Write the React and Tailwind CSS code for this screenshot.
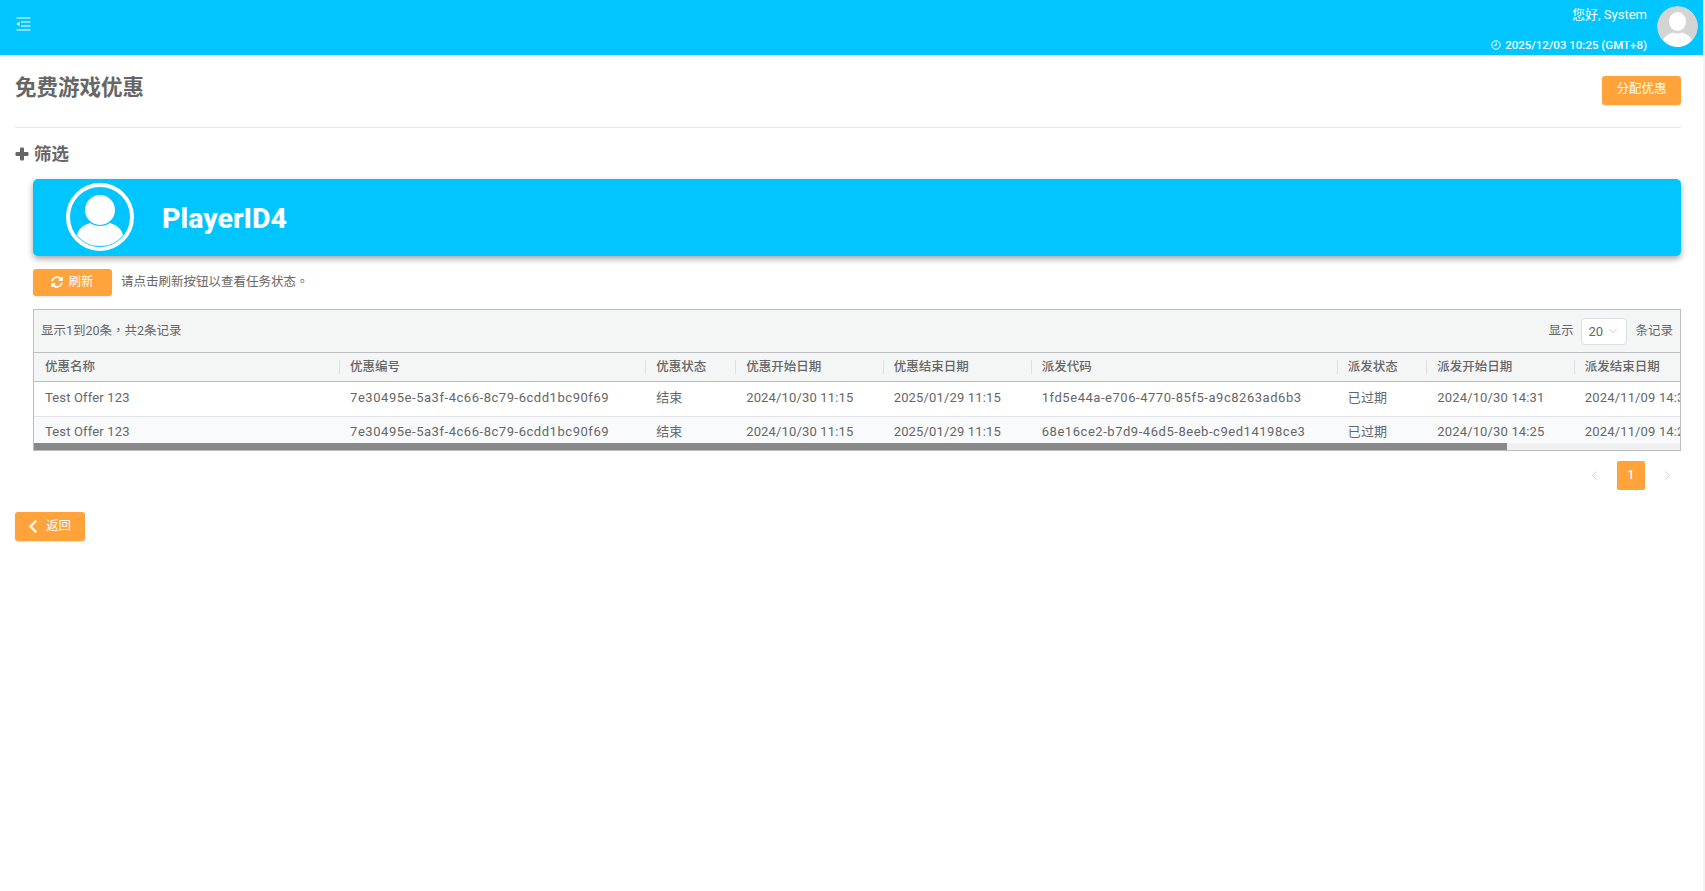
import React from 'react'
import { FaSyncAlt, FaChevronLeft } from 'react-icons/fa'
import { ChevronDown, ChevronLeft, ChevronRight } from 'lucide-react'

const font = { fontFamily: 'Roboto, "Noto Sans CJK SC", sans-serif' }
const fontTC = { fontFamily: 'Roboto, "Noto Sans CJK TC", sans-serif' }

const style = {
  orangeBtn:
    'flex items-center justify-center bg-[#ffa33a] text-white rounded-[3px] text-[12.5px] shadow-[0_1px_2px_rgba(0,0,0,0.1)]',
}

const columns = [
  { title: '优惠名称', width: 305 },
  { title: '优惠编号', width: 306 },
  { title: '优惠状态', width: 90 },
  { title: '优惠开始日期', width: 147.5 },
  { title: '优惠结束日期', width: 148 },
  { title: '派发代码', width: 306 },
  { title: '派发状态', width: 89.5 },
  { title: '派发开始日期', width: 147.5 },
  { title: '派发结束日期', width: 148 },
]

const rows = [
  ['Test Offer 123', '7e30495e-5a3f-4c66-8c79-6cdd1bc90f69', '结束', '2024/10/30 11:15', '2025/01/29 11:15', '1fd5e44a-e706-4770-85f5-a9c8263ad6b3', '已过期', '2024/10/30 14:31', '2024/11/09 14:31'],
  ['Test Offer 123', '7e30495e-5a3f-4c66-8c79-6cdd1bc90f69', '结束', '2024/10/30 11:15', '2025/01/29 11:15', '68e16ce2-b7d9-46d5-8eeb-c9ed14198ce3', '已过期', '2024/10/30 14:25', '2024/11/09 14:25'],
]

function OutdentIcon() {
  return (
    <svg width="15" height="14" viewBox="0 0 15 14" fill="none" stroke="white" strokeWidth="1.2">
      <path d="M0.5 1h14M5 5h9.5M5 9h9.5M0.5 13h14" />
      <path d="M0.5 7L3.5 4.8V9.2Z" fill="white" stroke="none" />
    </svg>
  )
}

function ClockIcon() {
  return (
    <svg width="10" height="10" viewBox="0 0 10 10" fill="none" stroke="white" strokeWidth="1">
      <circle cx="5" cy="5" r="4.2" />
      <path d="M5.2 2.4V5.4H2.9" />
    </svg>
  )
}

function PlusIcon() {
  return (
    <svg width="14" height="14" viewBox="0 0 14 14" fill="#666">
      <rect x="5" y="0.5" width="4" height="13" rx="1" />
      <rect x="0.5" y="5" width="13" height="4" rx="1" />
    </svg>
  )
}

function UserAvatar() {
  return (
    <svg width="41" height="41" viewBox="0 0 41 41" className="rounded-full">
      <circle cx="20.5" cy="20.5" r="20.5" fill="#d4d4d4" />
      <ellipse cx="20.5" cy="15.5" rx="8.5" ry="9.5" fill="white" />
      <path d="M6 34C9 28 14 27.5 16 26.5C18 28 23 28 25 26.5C27 27.5 32 28 35 34C31 38.5 26 41 20.5 41C15 41 10 38.5 6 34Z" fill="white" />
    </svg>
  )
}

function PlayerAvatar() {
  return (
    <svg width="68" height="68" viewBox="0 0 68 68">
      <circle cx="34" cy="34" r="32" fill="none" stroke="white" strokeWidth="4" />
      <circle cx="34" cy="27" r="15" fill="white" />
      <path d="M11 52C13 44 19 42 24 40C30 44 38 44 44 40C49 42 55 44 57 52C51 60 43 63 34 63C25 63 17 60 11 52Z" fill="white" />
    </svg>
  )
}

function App() {
  return (
    <div style={font} className="flex min-h-[891px] bg-white text-[#666]">
      <div className="w-[1703px]">
        <div className="h-[55px] bg-[#00c5ff] flex justify-between pl-[16px] pr-[5px] text-white">
          <div className="pt-[17px]">
            <OutdentIcon />
          </div>
          <div className="flex">
            <div className="flex flex-col items-end mr-[10px]">
              <div className="mt-[6px] h-[17px] leading-[17px] text-[13px]">您好, System</div>
              <div className="mt-[15px] h-[14px] leading-[14px] text-[11.5px] font-medium flex items-center gap-[4px]">
                <ClockIcon />
                2025/12/03 10:25 (GMT+8)
              </div>
            </div>
            <div className="pt-[6px]">
              <UserAvatar />
            </div>
          </div>
        </div>

        <div className="px-[15px] pr-[22px]">
          <div className="flex justify-between h-[73px] border-b border-[#e6e6e6]">
            <div className="mt-[18px] text-[21.5px] font-bold leading-[30px]">免费游戏优惠</div>
            <button className={`${style.orangeBtn} mt-[21px] w-[79px] h-[29px] pb-[2px]`}>分配优惠</button>
          </div>

          <div className="flex items-center mt-[14px] h-[24px] text-[17.5px] font-bold gap-[5px]">
            <PlusIcon />
            筛选
          </div>

          <div className="ml-[18px]">
            <div className="mt-[13px] h-[77px] bg-[#00c5ff] rounded-[5px] shadow-[0_3px_6px_rgba(0,0,0,0.35)] flex items-center pl-[33px] pb-[2px] text-white">
              <PlayerAvatar />
              <div className="ml-[28px] mt-[5px] text-[28.5px] font-extrabold leading-none">PlayerID4</div>
            </div>

            <div className="flex items-center mt-[13px] h-[27px] text-[12.5px]">
              <button className={`${style.orangeBtn} w-[79px] h-[27px] gap-[5px] pb-[1px]`}>
                <FaSyncAlt className="w-[12px] h-[12px]" />
                刷新
              </button>
              <div style={fontTC} className="ml-[9px]">请点击刷新按钮以查看任务状态。</div>
            </div>

            <div className="mt-[13px] border border-[#bcbfc2] h-[142px] overflow-hidden text-[13px]">
              <div className="h-[43px] bg-[#f4f5f5] border-b border-[#bcbfc2] flex items-center justify-between px-[7px] text-[12.5px]">
                <div style={fontTC}>显示1到20条，共2条记录</div>
                <div className="flex items-center">
                  <span>显示</span>
                  <div className="ml-[8px] w-[46px] h-[27px] bg-white border border-[#dcdfe3] rounded-[4px] flex items-center pl-[6px] pt-[2px] gap-[3px] text-[13px]">
                    20
                    <ChevronDown className="w-[14px] h-[14px] text-[#b8b8b8] -mt-[3px]" strokeWidth={1.2} />
                  </div>
                  <span className="ml-[8px]">条记录</span>
                </div>
              </div>

              <div className="h-[90px] overflow-hidden">
                <table className="table-fixed border-collapse w-[1688px]">
                  <colgroup>
                    {columns.map((col) => (
                      <col key={col.title} style={{ width: col.width }} />
                    ))}
                  </colgroup>
                  <thead>
                    <tr className="h-[28px] bg-[#f4f5f5] border-b border-[#bcbfc2]">
                      {columns.map((col, i) => (
                        <th key={col.title} className="font-medium text-left text-[12.5px] p-0">
                          <div className={`h-[14px] leading-[14px] flex items-center whitespace-nowrap ${i === 0 ? 'pl-[11px]' : 'pl-[10px] border-l border-[#dddfe0]'}`}>
                            {col.title}
                          </div>
                        </th>
                      ))}
                    </tr>
                  </thead>
                  <tbody>
                    {rows.map((row, r) => (
                      <tr key={r} className={r === 0 ? 'h-[35px] bg-white border-b border-[#e2e4e7]' : 'h-[35px] bg-[#f9fafc]'}>
                        {row.map((cell, i) => (
                          <td
                            key={i}
                            className={`p-0 pl-[11px] align-top whitespace-nowrap overflow-hidden leading-[17px] ${r === 0 ? 'pt-[7px]' : 'pt-[6px]'} ${i === 1 || i === 5 ? 'tracking-[0.54px]' : 'tracking-[0.15px]'}`}
                          >
                            {cell}
                          </td>
                        ))}
                      </tr>
                    ))}
                  </tbody>
                </table>
              </div>

              <div className="h-[7px] bg-[#f0f0f0]">
                <div className="h-[7px] w-[1473px] bg-[#888]" />
              </div>
            </div>
          </div>

          <div className="ml-[18px] flex justify-end items-center mt-[10px] h-[29px] pr-[6px]">
            <ChevronLeft className="w-[15px] h-[15px] text-[#bdbdbd]" strokeWidth={1.2} />
            <div className="ml-[15px] mr-[15px] w-[28px] h-[29px] bg-[#ffa33a] rounded-[2px] text-white text-[12px] font-medium flex items-center justify-center pb-[2px]">1</div>
            <ChevronRight className="w-[15px] h-[15px] text-[#bdbdbd]" strokeWidth={1.2} />
          </div>

          <button className={`${style.orangeBtn} mt-[22px] w-[70px] h-[29px] gap-[7px] pr-[2px]`}>
            <FaChevronLeft className="w-[12px] h-[15px]" />
            返回
          </button>
        </div>
      </div>
      <div className="w-[2px] bg-[#f3f3f3]" />
    </div>
  )
}

export default App
